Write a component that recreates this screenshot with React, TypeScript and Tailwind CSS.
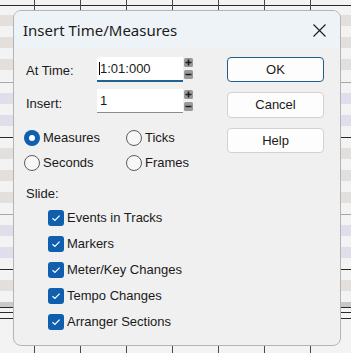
import { Fragment } from "react";

type Row = { h: number; c: string };

const L = "bg-[#f3f3f3]";
const B = "bg-[#e3dfdc]";
const V = "bg-[#dfdeea]";
const DARK = "bg-[#2a2a2a]";
const GRAY = "bg-[#a8a8a8]";

// background track lanes, top to bottom
const rows: Row[] = [
  { h: 5, c: L }, { h: 1, c: DARK }, { h: 9, c: L },
  { h: 11, c: B }, { h: 11, c: L }, { h: 11, c: B }, { h: 11, c: L }, { h: 11, c: B }, { h: 12, c: L },
  { h: 1, c: GRAY }, { h: 10, c: L },
  { h: 11, c: V }, { h: 11, c: L }, { h: 11, c: V }, { h: 11, c: L },
  { h: 1, c: DARK }, { h: 10, c: L },
  { h: 11, c: B }, { h: 11, c: L }, { h: 11, c: B }, { h: 11, c: L }, { h: 11, c: B }, { h: 11, c: L },
  { h: 1, c: GRAY }, { h: 10, c: L },
  { h: 11, c: V }, { h: 11, c: L }, { h: 11, c: V }, { h: 11, c: L },
  { h: 1, c: DARK }, { h: 10, c: L },
  { h: 11, c: B }, { h: 11, c: L },
  { h: 5, c: "bg-[#c9c9c9]" }, { h: 1, c: DARK }, { h: 4, c: L }, { h: 1, c: DARK }, { h: 5, c: L }, { h: 1, c: DARK },
  { h: 40, c: L },
];

const gridX = [34, 80, 126, 172, 218, 264, 310];

function Spinner() {
  return (
    <div className="flex flex-col justify-between h-[22px] ml-[1px] pt-[1px]">
      <svg width="9" height="9" viewBox="0 0 9 9">
        <rect x="0" y="0" width="9" height="9" rx="1.5" fill="#9a9a9a" />
        <path d="M1.5 4.5h6M4.5 1.5v6" stroke="#1c1c1c" strokeWidth="1.6" />
      </svg>
      <svg width="9" height="9" viewBox="0 0 9 9">
        <rect x="0" y="0" width="9" height="9" rx="1.5" fill="#9a9a9a" />
        <path d="M1.5 4.5h6" stroke="#1c1c1c" strokeWidth="1.6" />
      </svg>
    </div>
  );
}

function Radio({ on, label }: { on?: boolean; label: string }) {
  return (
    <div className="flex items-center h-[16px]">
      {on ? (
        <div className="w-[16px] h-[16px] rounded-full bg-[#0f5fae] flex items-center justify-center">
          <div className="w-[6px] h-[6px] rounded-full bg-white" />
        </div>
      ) : (
        <div className="w-[16px] h-[16px] rounded-full border border-[#5c5c5c] bg-[#f7f7f7]" />
      )}
      <span className="ml-[3px]">{label}</span>
    </div>
  );
}

function Check({ label }: { label: string }) {
  return (
    <div className="flex items-center h-[16px]">
      <div className="w-[16px] h-[16px] rounded-[3px] bg-[#0f5fae] flex items-center justify-center">
        <svg width="10" height="8" viewBox="0 0 10 8">
          <path d="M1.5 4.2l2.4 2.3L8.6 1.6" fill="none" stroke="#fff" strokeWidth="1.2" />
        </svg>
      </div>
      <span className="ml-[3px]">{label}</span>
    </div>
  );
}

export default function App() {
  return (
    <div className="relative w-[351px] h-[353px] overflow-hidden bg-[#f3f3f3]">
      {/* Track lanes */}
      <div className="flex flex-col">
        {rows.map((r, i) => (
          <div key={i} className={`${r.c} shrink-0`} style={{ height: r.h }} />
        ))}
      </div>
      {gridX.map((x) => (
        <Fragment key={x}>
          <div className="absolute top-0 w-px h-full bg-[#4a4a4a]" style={{ left: x }} />
        </Fragment>
      ))}

      {/* Dialog */}
      <div
        className="absolute left-[13px] top-[10px] w-[328px] h-[336px] rounded-[8px] border border-[#b4b4b4] bg-[#f0f0f0] overflow-hidden flex flex-col text-[13px] text-[#1a1a1a]"
        style={{ fontFamily: '"Liberation Sans", Arial, sans-serif' }}
      >
        {/* Title bar */}
        <div className="h-[38px] shrink-0 bg-[#eef3f8] flex items-center justify-between pl-[9px] pr-[14px]">
          <span
            className="text-[15px] text-[#1b1b1b] pt-[1px]"
            style={{ fontFamily: '"Noto Sans", "Open Sans", sans-serif' }}
          >
            Insert Time/Measures
          </span>
          <svg width="13" height="13" viewBox="0 0 13 13">
            <path d="M0.5 0.5l12 12M12.5 0.5l-12 12" stroke="#1b1b1b" strokeWidth="1.1" />
          </svg>
        </div>

        {/* Body */}
        <div className="flex pt-[8px]">
          <div className="flex-1 pl-[12px]">
            <div className="flex items-start h-[25px]">
              <span className="w-[71px] pt-[4px]">At Time:</span>
              <div className="w-[86px] h-[25px] bg-white border-b-2 border-[#22628e] flex items-center pl-[2px]">
                <div className="w-px h-[13px] bg-black" />
                <span>1:01:000</span>
              </div>
              <Spinner />
            </div>
            <div className="flex items-start h-[25px] mt-[7px]">
              <span className="w-[71px] pt-[5px]">Insert:</span>
              <div className="w-[86px] h-[24px] bg-white border-b border-[#8c8c8c] flex items-center pl-[3px]">
                <span>1</span>
              </div>
              <Spinner />
            </div>

            <div className="grid grid-cols-[102px_1fr] gap-y-[9px] mt-[16px] -ml-[2px]">
              <Radio on label="Measures" />
              <Radio label="Ticks" />
              <Radio label="Seconds" />
              <Radio label="Frames" />
            </div>

            <div className="mt-[13px] h-[16px]">Slide:</div>

            <div className="flex flex-col gap-[10px] mt-[10px] pl-[22px]">
              <Check label="Events in Tracks" />
              <Check label="Markers" />
              <Check label="Meter/Key Changes" />
              <Check label="Tempo Changes" />
              <Check label="Arranger Sections" />
            </div>
          </div>

          <div className="w-[97px] mr-[16px] flex flex-col gap-[10px]">
            <button className="h-[25px] rounded-[4px] border border-[#1f5f8b] bg-[#fdfdfd] text-[13px]">OK</button>
            <button className="h-[26px] rounded-[4px] border border-[#d2d2d2] bg-[#fdfdfd] text-[13px]">Cancel</button>
            <button className="h-[25px] rounded-[4px] border border-[#d2d2d2] bg-[#fdfdfd] text-[13px]">Help</button>
          </div>
        </div>
      </div>
    </div>
  );
}
